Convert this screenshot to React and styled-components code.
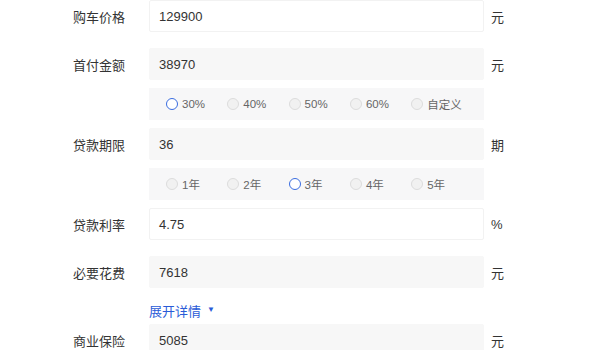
import styled, { createGlobalStyle } from 'styled-components';

const GlobalStyle = createGlobalStyle`
  html, body {
    margin: 0;
    padding: 0;
    background: #fff;
  }
  body {
    font-family: "Liberation Sans", "Noto Sans CJK SC", sans-serif;
    color: #333;
  }
`;

const Form = styled.div`
  display: flex;
  flex-direction: column;
  width: 600px;
`;

const Row = styled.div`
  display: grid;
  grid-template-columns: 149px 335px 1fr;
  align-items: center;
  height: 32px;
  margin-bottom: ${p => p.$gap}px;
`;

const Label = styled.div`
  font-size: 13px;
  color: #333;
  text-align: right;
  padding-right: 24px;
`;

const Field = styled.div`
  box-sizing: border-box;
  height: 32px;
  display: flex;
  align-items: center;
  padding-left: 9px;
  font-size: 13px;
  color: #333;
  background: ${p => (p.$plain ? '#fff' : '#f7f7f7')};
  border: 1px solid ${p => (p.$plain ? '#f2f2f2' : '#f7f7f7')};
  border-radius: 2px;
`;

const Unit = styled.div`
  font-size: 13px;
  color: #333;
  padding-left: 7px;
`;

const OptionBar = styled.div`
  grid-column: 2;
  box-sizing: border-box;
  height: 32px;
  display: flex;
  align-items: center;
  padding-left: 17px;
  background: #f7f7f8;
`;

const Option = styled.div`
  width: 61.3px;
  flex: none;
  display: flex;
  align-items: center;
  gap: 4px;
  font-size: 11.5px;
  color: #666;
`;

const Dot = styled.span`
  box-sizing: border-box;
  width: 12px;
  height: 12px;
  border-radius: 50%;
  border: ${p => (p.$on ? '1.5px solid #3a6de0' : '1px solid #dcdcdc')};
  background: ${p => (p.$on ? '#fff' : '#f1f1f1')};
`;

const MoreRow = styled.div`
  display: grid;
  grid-template-columns: 149px 1fr;
  height: 28px;
  margin-top: 8px;
  align-items: center;
`;

const MoreLink = styled.a`
  grid-column: 2;
  font-size: 13px;
  color: #2a5bd7;
  cursor: pointer;
  display: flex;
  align-items: center;
  gap: 6px;
`;

const Caret = styled.span`
  font-size: 8px;
  line-height: 1;
`;

function Options({ items, active }) {
  return (
    <Row $gap={8}>
      <span />
      <OptionBar>
        {items.map(it => (
          <Option key={it}>
            <Dot $on={it === active} />
            {it}
          </Option>
        ))}
      </OptionBar>
    </Row>
  );
}

function Line({ label, value, unit, plain, gap }) {
  return (
    <Row $gap={gap}>
      <Label>{label}</Label>
      <Field $plain={plain}>{value}</Field>
      <Unit>{unit}</Unit>
    </Row>
  );
}

export default function App() {
  return (
    <>
      <GlobalStyle />
      <Form>
        <Line label="购车价格" value="129900" unit="元" plain gap={16} />
        <Line label="首付金额" value="38970" unit="元" gap={8} />
        <Options items={['30%', '40%', '50%', '60%', '自定义']} active="30%" />
        <Line label="贷款期限" value="36" unit="期" gap={8} />
        <Options items={['1年', '2年', '3年', '4年', '5年']} active="3年" />
        <Line label="贷款利率" value="4.75" unit="%" plain gap={16} />
        <Line label="必要花费" value="7618" unit="元" gap={0} />
        <MoreRow>
          <MoreLink>
            展开详情<Caret>▼</Caret>
          </MoreLink>
        </MoreRow>
        <Line label="商业保险" value="5085" unit="元" gap={0} />
      </Form>
    </>
  );
}
